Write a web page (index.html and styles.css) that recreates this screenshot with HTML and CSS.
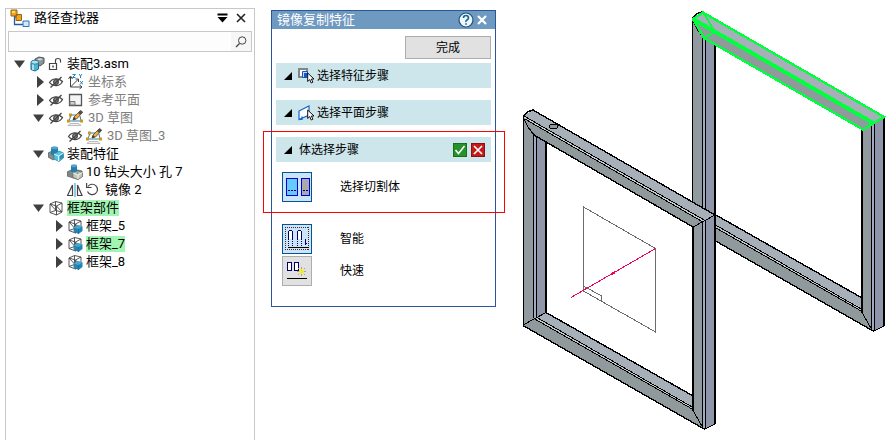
FILE: index.html
```html
<!DOCTYPE html>
<html lang="zh-CN">
<head>
	<meta charset="utf-8">
	<meta name="viewport" content="width=device-width, initial-scale=1">
	<title>镜像复制特征</title>
	<link rel="stylesheet" href="styles.css">
</head>
<body>

	<!-- shared icons -->
	<svg class="defs" width="0" height="0" aria-hidden="true">
		<symbol id="i-open" viewBox="0 0 14 16"><path d="M2 4.500h11L7.500 12z" fill="#404040"/></symbol>
		<symbol id="i-closed" viewBox="0 0 14 16"><path d="M6 2l7 6-7 6z" fill="#404040"/></symbol>
		<symbol id="i-eye" viewBox="0 0 16 16">
			<path d="M1.500 8.500C4 4 11 3.500 14.500 7.500C12 12.500 5 13 1.500 8.500z" fill="none" stroke="#444" stroke-width="1.200"/>
			<circle cx="8" cy="8" r="2.300" fill="#999" stroke="#444" stroke-width="1.300"/>
			<path d="M2.500 13.500L13.500 3" stroke="#444" stroke-width="1.300"/>
		</symbol>
		<symbol id="i-asm" viewBox="0 0 16 16">
			<path d="M6 3l4-2 5 1v5l-4 3-5-2z" fill="#8d9696" stroke="#4b5558"/>
			<path d="M8 3.500l3-1.200 3 .7-3 1.500z" fill="#d5dcda"/>
			<path d="M2 6.500v7l4 1.500 3.500-2V6.500z" fill="#4bb3d6" stroke="#1c6583"/>
			<path d="M4 8v6" stroke="#c6f1fb" stroke-width="1.500"/>
			<ellipse cx="5.800" cy="6.200" rx="3.800" ry="2" fill="#a5e3f2" stroke="#1c6583" stroke-width=".8"/>
		</symbol>
		<symbol id="i-lock" viewBox="0 0 16 16">
			<path d="M1.500 7.500h7v6h-7zM7.500 7.500v-3q0-2 2.500-2t2.500 2v2" fill="none" stroke="#444" stroke-width="1.200"/>
			<path d="M5 9.500v2" stroke="#444" stroke-width="1.500"/>
		</symbol>
		<symbol id="i-axes" viewBox="0 0 16 16">
			<path d="M3.500 3v10H15M3.500 13l8-8" fill="none" stroke="#444"/>
			<path d="M1.500 5l2-3 2 3M12.500 11l2.500 2-2.500 2M8.500 5h3v3" fill="none" stroke="#444"/>
			<path d="M5.500 .5h3l-3 3h3M12 0l1.500 2L15 0M13.500 2v2M13 7l3 3.500M16 7l-3 3.500" fill="none" stroke="#2388b8"/>
		</symbol>
		<symbol id="i-plane" viewBox="0 0 16 16">
			<path d="M2.500 2.500h12v11h-12z" fill="#f4f4f4" stroke="#555" stroke-width="1.300"/>
			<path d="M3 13V9.500h5V13z" fill="#ccc" stroke="#777"/>
		</symbol>
		<symbol id="i-sketch" viewBox="0 0 16 16">
			<path d="M3 13.500h9l2 2H1z" fill="#eee" stroke="#bbb"/>
			<path d="M2 11L4 5h6M2 11h12l-1-5" fill="none" stroke="#317fae"/>
			<path d="M6 10l1-3 6-6 2.500 1.500-6 6.500z" fill="#e9b342" stroke="#504329" stroke-width=".8"/>
			<path d="M11 3l2.500-3L16 2l-3 3z" fill="#554d46"/>
			<path d="M6 10l1-3 2 2z" fill="#333"/>
			<path d="M2 3.500h3v3H2zM0 9.500h3v3H0zM13 9.500h3v3h-3z" fill="#c89a18"/>
		</symbol>
		<symbol id="i-feature" viewBox="0 0 16 16">
			<path d="M0 7l4-2 4 2v5l-3 2-5-3z" fill="#858c8b" stroke="#515a5b" stroke-width=".7"/>
			<path d="M3 1.500v7q3.500 2 7 0v-7z" fill="#227eaa"/>
			<ellipse cx="6.500" cy="1.800" rx="3.500" ry="1.500" fill="#50a5ca"/>
			<path d="M6 8l5-3 4.500 2v5L11 15.500 6 13z" fill="#56c4df" stroke="#257b99" stroke-width=".7"/>
			<path d="M6 8l4.500 2 5-3M10.500 10v5" fill="none" stroke="#daf8ff"/>
			<path d="M12 10l3-2v3.500l-3 2z" fill="#298eac"/>
		</symbol>
		<symbol id="i-hole" viewBox="0 0 16 16">
			<path d="M0 8l6-3 9 2 1 5-5 3.500L0 12z" fill="#7e8887" stroke="#515a5b" stroke-width=".7"/>
			<path d="M4 1.500v6q3 2 6 0v-6z" fill="#227eaa"/>
			<ellipse cx="7" cy="1.800" rx="3" ry="1.500" fill="#50a5ca"/>
			<path d="M6 9l4.500-2 5 1.500v4l-4.500 3L6 13.500z" fill="#c9c7b9" stroke="#697071" stroke-width=".7"/>
			<path d="M6 9l5 2 4.500-2.500M11 11v4" fill="none" stroke="#eee"/>
			<circle cx="10.500" cy="9" r="1" fill="#4daaa0"/>
		</symbol>
		<symbol id="i-mirror" viewBox="0 0 16 16">
			<path d="M5.500 3v10.500h-5zM10.500 3v10.500h4.500z" fill="none" stroke="#444" stroke-width="1.200"/>
			<path d="M8 1v14" stroke="#47a9cf" stroke-width="1.200"/>
		</symbol>
		<symbol id="i-undo" viewBox="0 0 16 16">
			<path d="M2 4.500a5.200 5.200 0 1 1-.5 5" fill="none" stroke="#444" stroke-width="1.200"/>
			<path d="M.6 1v4.500h5" fill="none" stroke="#444" stroke-width="1.200"/>
		</symbol>
		<symbol id="i-frame" viewBox="0 0 16 16">
			<path d="M2 4l5.500-2.500L14 3v9l-5.500 3L2 12.500zM2 4l6.500 2L14 3M8.500 6v9M7.500 1.500v9L2 12.500M7.500 10.500L14 12M2 4l6.500 7M8.500 6l5.500 6" fill="none" stroke="#444" stroke-width=".9"/>
		</symbol>
		<symbol id="i-part" viewBox="0 0 16 16">
			<use href="#i-frame" width="16" height="16"/>
			<path d="M6.500 9.500l4-2.500 5 1.500v4.500L11.500 16l-5-2.500z" fill="#2385b5"/>
			<path d="M6.500 9.500l4-2.500 5 1.500-4 2.500z" fill="#4ba5cc"/>
			<path d="M11.500 11v5" stroke="#196d98" stroke-width=".8"/>
		</symbol>
		<symbol id="i-cursor" viewBox="0 0 8 12"><path d="M.7 1v8.500l2-2 1.500 3.500 1.700-.8-1.500-3.200H7z" fill="#fff" stroke="#111"/></symbol>
	</svg>

	<aside class="finder">
		<header class="finder-head">
			<svg class="finder-logo" viewBox="0 0 20 18">
				<path d="M4.500 6v9.500H13M4.500 8H9" fill="none" stroke="#275b9b" stroke-width="1.300"/>
				<path d="M1 1h6v6H1zM6 5.500h5.500v6H6z" fill="#f4a11b" stroke="#96651b"/>
				<path d="M2 2h3v2H2z" fill="#ffd674"/>
				<path d="M13 12h6v5.500h-6z" fill="#d3e9fb" stroke="#2a75bb"/>
			</svg>
			<h1>路径查找器</h1>
			<button type="button" aria-label="选项"><svg width="11" height="10" viewBox="0 0 11 10"><path d="M.5.5h10v2H.5zM.5 4h10L5.500 9.500z"/></svg></button>
			<button type="button" aria-label="关闭"><svg width="10" height="10" viewBox="0 0 10 10"><path d="M1 1l8 8M9 1L1 9" stroke="#222" stroke-width="1.600"/></svg></button>
		</header>
		<form class="search">
			<input type="text" aria-label="搜索">
			<button type="button" aria-label="查找"><svg width="12" height="12" viewBox="0 0 12 12"><circle cx="7.200" cy="4.500" r="3.700" fill="none" stroke="#444"/><path d="M4.500 7.500L1 11" stroke="#444" stroke-width="1.300"/></svg></button>
		</form>

		<ul class="tree">
			<li>
				<div class="node"><button type="button" aria-label="折叠"><svg><use href="#i-open"/></svg></button><svg><use href="#i-asm"/></svg><svg><use href="#i-lock"/></svg><span>装配3.asm</span></div>
				<ul>
					<li><div class="node dim"><button type="button" aria-label="展开"><svg><use href="#i-closed"/></svg></button><svg><use href="#i-eye"/></svg><svg><use href="#i-axes"/></svg><span>坐标系</span></div></li>
					<li><div class="node dim"><button type="button" aria-label="展开"><svg><use href="#i-closed"/></svg></button><svg><use href="#i-eye"/></svg><svg><use href="#i-plane"/></svg><span>参考平面</span></div></li>
					<li>
						<div class="node dim"><button type="button" aria-label="折叠"><svg><use href="#i-open"/></svg></button><svg><use href="#i-eye"/></svg><svg><use href="#i-sketch"/></svg><span>3D 草图</span></div>
						<ul>
							<li><div class="node leaf dim"><svg><use href="#i-eye"/></svg><svg><use href="#i-sketch"/></svg><span>3D 草图_3</span></div></li>
						</ul>
					</li>
					<li>
						<div class="node"><button type="button" aria-label="折叠"><svg><use href="#i-open"/></svg></button><svg><use href="#i-feature"/></svg><span>装配特征</span></div>
						<ul>
							<li><div class="node leaf"><svg><use href="#i-hole"/></svg><span>10 钻头大小 孔 7</span></div></li>
							<li><div class="node leaf"><svg><use href="#i-mirror"/></svg><svg><use href="#i-undo"/></svg><span>镜像 2</span></div></li>
						</ul>
					</li>
					<li>
						<div class="node"><button type="button" aria-label="折叠"><svg><use href="#i-open"/></svg></button><svg><use href="#i-frame"/></svg><span class="picked">框架部件</span></div>
						<ul>
							<li><div class="node"><button type="button" aria-label="展开"><svg><use href="#i-closed"/></svg></button><svg><use href="#i-part"/></svg><span>框架_5</span></div></li>
							<li><div class="node"><button type="button" aria-label="展开"><svg><use href="#i-closed"/></svg></button><svg><use href="#i-part"/></svg><span class="picked">框架_7</span></div></li>
							<li><div class="node"><button type="button" aria-label="展开"><svg><use href="#i-closed"/></svg></button><svg><use href="#i-part"/></svg><span>框架_8</span></div></li>
						</ul>
					</li>
				</ul>
			</li>
		</ul>
	</aside>

	<section class="dialog">
		<header class="dialog-head">
			<h2>镜像复制特征</h2>
			<button type="button" aria-label="帮助"><svg width="16" height="16" viewBox="0 0 16 16"><circle cx="8" cy="8" r="7" fill="#eef8fc" stroke="#1e5479" stroke-width="1.200"/><path d="M5.500 6q0-2.500 2.500-2.500T10.500 6q0 1-1.500 2T8 10M8 11.200v1.600" fill="none" stroke="#17659a" stroke-width="1.600"/></svg></button>
			<button type="button" aria-label="关闭"><svg width="10" height="10" viewBox="0 0 10 10"><path d="M1 1l8 8M9 1L1 9" stroke="#fff" stroke-width="2.200"/></svg></button>
		</header>
		<div class="dialog-body">
			<button type="button" class="finish">完成</button>

			<div class="step">
				<svg class="mark" viewBox="0 0 8 8"><path d="M8 0v8H0z"/></svg>
				<svg class="step-icon" viewBox="0 0 16 16">
					<path d="M1 1h8v8H1z" fill="#fff" stroke="#858585" stroke-width="2"/>
					<path d="M4.500 3.500h5v6h-5z" fill="#bddcff" stroke="#1453c8"/>
					<path d="M6 5h3v4H6z" fill="#1453c8"/>
					<use href="#i-cursor" x="9" y="4" width="8" height="12"/>
				</svg>
				<span>选择特征步骤</span>
			</div>
			<div class="step">
				<svg class="mark" viewBox="0 0 8 8"><path d="M8 0v8H0z"/></svg>
				<svg class="step-icon" viewBox="0 0 16 16">
					<path d="M1 6L11 1v9L1 14.500zM1 14.500h3v-3" fill="#fff" stroke="#1267c8" stroke-width="1.200"/>
					<use href="#i-cursor" x="9" y="4" width="8" height="12"/>
				</svg>
				<span>选择平面步骤</span>
			</div>

			<div class="current">
				<div class="step">
					<svg class="mark" viewBox="0 0 8 8"><path d="M8 0v8H0z"/></svg>
					<span class="step-name">体选择步骤</span>
					<button type="button" class="ok" aria-label="接受"><svg width="12" height="12" viewBox="0 0 12 12"><path d="M1.500 6l3 3.500 6-7.500" fill="none" stroke="#fff" stroke-width="1.500"/></svg></button>
					<button type="button" class="cancel" aria-label="取消"><svg width="12" height="12" viewBox="0 0 12 12"><path d="M2 2l8 8M10 2l-8 8" stroke="#fff" stroke-width="1.600"/></svg></button>
				</div>
				<div class="option">
					<button type="button" class="tool on" id="cut"><svg viewBox="0 0 26 26"><path d="M2.500 4.500h11v17h-11z" fill="#66ccff" stroke="#00d"/><path d="M17.500 4.500h8v17h-8z" fill="#aaa" stroke="#00d"/><path d="M4 16.500h9M19 16.500h6" stroke="#006" stroke-dasharray="2 1"/></svg></button>
					<label for="cut">选择切割体</label>
				</div>
			</div>

			<div class="option">
				<button type="button" class="tool on" id="smart"><svg viewBox="0 0 26 26"><path d="M1 1.500h24M1 23.500h24M1.500 1v23M24.500 1v23" stroke="#521" stroke-dasharray="1 1"/><path d="M4.500 13V5.500l1-1h2l1 1V13M13.500 13V5.500l1-1h2l1 1V13" fill="#fff" stroke="#006"/><path d="M4.500 13v8M8.500 13v8M13.500 13v8M17.500 13v8" stroke="#006" stroke-dasharray="1 1"/><path d="M4 21.500h21" stroke="#000"/><path d="M21.500 13v6M20.500 17.500h2" stroke="#006"/></svg></button>
				<label for="smart">智能</label>
			</div>
			<div class="option">
				<button type="button" class="tool" id="fast"><svg viewBox="0 0 26 26"><path d="M3.500 12.500V5l1-.5h2l1 .5v7.500zM10.500 12.500V5l1-.5h2l1 .5v7.500z" fill="#fff" stroke="#006"/><path d="M3 20.500h20" stroke="#000"/><path d="M17.500 9v9M13 13.500h9M14 10l7 7M21 10l-7 7" stroke="#aaa58a"/><path d="M17.500 11v5M15 13.500h5M15 11l5 5M20 11l-5 5" stroke="#f5ee18"/></svg></button>
				<label for="fast">快速</label>
			</div>
		</div>
	</section>

	<main class="view">
		<svg viewBox="505 0 389 440" role="img" aria-label="框架模型">
			<defs>
				<!-- one welded frame: posts, bottom beam, top beam -->
				<g id="frame" stroke="#000" stroke-width="1" fill="none">
					<g stroke="none">
						<path d="M523 116h11v202l-11 7z" fill="#919a9f"/>
						<path d="M534 130h3v187l-3 2z" fill="#a2a9c2"/>
						<path d="M537 130h9v182l-9 5z" fill="#8f96a9"/>
						<path d="M546 312l148 84v14L534 318z" fill="#a7b0b8"/>
						<path d="M523 325l11-7 160 92 11 19z" fill="#90999c"/>
						<path d="M534 318l3-1 157 90v3z" fill="#c0c8ca"/>
					</g>
					<path d="M523.500 117v208M533.500 135v183M536.500 137v180"/>
					<path d="M546 142v170" stroke-width="2"/>
					<path d="M523 325.500L705 429.500M546 312.500L694 396.500" stroke-width="1.400"/>
					<path d="M523 325l24-13M534 318.500l159 91M537 317.500l156 90"/>
					<g stroke="none">
						<path d="M693 226l9-5v207l-9-17z" fill="#919a9f"/>
						<path d="M702 221h4v208l-4-1z" fill="#a2a9c2"/>
						<path d="M706 220l9-5v209l-9 5z" fill="#8f96a9"/>
					</g>
					<path d="M693 226v185M715 215v209" stroke-width="2"/>
					<path d="M693 410.500l10 17.500 2 1 10-5M702.500 221v206M705.500 220v209"/>
					<g stroke="none">
						<path d="M523 116l10-6 182 105-10 6z" fill="#a7b0b8"/>
						<path d="M523 117l182 104-12 6-159-92z" fill="#90999c"/>
						<path d="M524 116l181 104.500-3 1.500L525 119z" fill="#c4cccc"/>
					</g>
					<path d="M523 116.500l5.500-5 4.500-1.500L715 215M693 227L534 135" stroke-width="1.400"/>
					<path d="M524 116l181 104.500M525 119l177 102.500M715 215l-22 12M523 117l5 10 6 8"/>
				</g>
			</defs>
			<g shape-rendering="crispEdges">
				<use href="#frame" x="169" y="-98"/>
				<g fill="none" stroke="#00ff3c" stroke-width="2.400">
					<path d="M693 19l10-6.500 181 104.500-21 12.500L704 38z"/>
					<path d="M693 19l181 104.500" stroke-width="4"/>
					<path d="M703 12l12 20-11 6M693 19l20 12" stroke-width="2"/>
				</g>
				<use href="#frame"/>
				<ellipse cx="553.500" cy="126.500" rx="4" ry="2.500" fill="#8f989d" stroke="#000"/>
				<path d="M583.500 207L655.500 248.500V332L583.500 291zM583.500 286l18 10v5" fill="none" stroke="#6c6c6c"/>
				<path d="M571 297.500L655.500 248.500" stroke="#f0005c"/>
				<path d="M612 274l3-2" stroke="#f0005c" stroke-width="2"/>
			</g>
		</svg>
	</main>

</body>
</html>
```
FILE: styles.css
```css
* {
	box-sizing: border-box;
}
body {
	display: flex;
	align-items: flex-start;
	margin: 0;
	min-height: 100vh;
	background: #fff;
	color: #000;
	font: 13px/18px Roboto, "Noto Sans CJK SC", sans-serif;
}
h1, h2 {
	flex: 1;
	margin: 0;
	font-size: 13px;
	font-weight: normal;
}
ul {
	list-style: none;
	margin: 0;
	padding: 0;
}
button {
	display: flex;
	align-items: center;
	justify-content: center;
	padding: 0;
	border: none;
	background: none;
	color: inherit;
	font: inherit;
}
svg {
	display: block;
	flex: none;
}
.defs {
	position: absolute;
}

/* path finder */
.finder {
	flex: 0 0 250px;
	align-self: stretch;
	margin: 8px 0 0 5px;
	border: 1px solid #c8c8c8;
	border-bottom: none;
}
.finder-head {
	display: flex;
	align-items: center;
	gap: 8px;
	height: 18px;
	padding: 0 8px 0 4px;
}
.finder-head h1 {
	margin-left: -4px;
}
.finder-logo {
	width: 20px;
	height: 18px;
}
.search {
	display: flex;
	height: 21px;
	margin: 4px 2px 3px;
	border: 1px solid #c8c8c8;
}
.search input {
	flex: 1;
	min-width: 0;
	padding: 0 4px;
	border: none;
	background: #fdfdfd;
	font: inherit;
}
.search button {
	width: 20px;
	background: #f6f6f6;
}
.tree {
	padding-left: 6px;
}
.tree ul {
	padding-left: 19px;
}
.node {
	display: flex;
	align-items: center;
	gap: 3px;
	height: 18px;
	white-space: nowrap;
}
.node svg {
	width: 16px;
	height: 16px;
}
.node button svg {
	width: 14px;
}
.node span {
	line-height: 16px;
}
.leaf {
	padding-left: 17px;
}
.dim span {
	margin-left: 2px;
	color: #808080;
}
.picked {
	background: #a0f5b0;
}

/* command dialog */
.dialog {
	flex: 0 0 225px;
	margin: 10px 9px 0 16px;
	border: 1px solid #2b579a;
	font-size: 12px;
}
.dialog-head {
	display: flex;
	align-items: center;
	gap: 3px;
	height: 18px;
	padding: 0 8px 0 5px;
	background: #6e99c1;
	color: #fff;
}
.dialog-body {
	display: flex;
	flex-direction: column;
	padding: 7px 4px 19px;
}
.finish {
	align-self: flex-end;
	width: 86px;
	height: 23px;
	margin-bottom: 4px;
	border: 1px solid #adadad;
	background: #e1e1e1;
}
.step {
	display: flex;
	align-items: center;
	gap: 3px;
	height: 25px;
	margin-bottom: 12px;
	padding: 0 6px 0 8px;
	background: #cde6eb;
}
.mark {
	width: 8px;
	height: 8px;
	margin-right: 3px;
}
.step-icon {
	width: 16px;
	height: 16px;
}
.step-name {
	flex: 1;
}
.step button {
	width: 14px;
	height: 14px;
}
.ok {
	border: 1px solid #1d6b1d;
	background: #26922a;
}
.cancel {
	border: 1px solid #8c1212;
	background: #c41a1a;
}
.current {
	position: relative;
	margin-bottom: 20px;
}
.current::after {
	content: "";
	position: absolute;
	inset: -6px -14px -10px -13px;
	border: 1px solid #f00;
	pointer-events: none;
}
.current .step {
	gap: 4px;
	margin-bottom: 9px;
}
.option {
	display: flex;
	align-items: center;
	gap: 28px;
	height: 32px;
	padding-left: 6px;
}
.tool {
	width: 30px;
	height: 30px;
	border: 1px solid #adadad;
	background: #e1e1e1;
}
.tool.on {
	border-color: #00549b;
	background: #cce4f7;
}
.tool svg {
	width: 26px;
	height: 26px;
	shape-rendering: crispEdges;
}

/* model view */
.view {
	flex: 1;
	min-width: 0;
}
.view svg {
	width: 100%;
	height: auto;
}
```
